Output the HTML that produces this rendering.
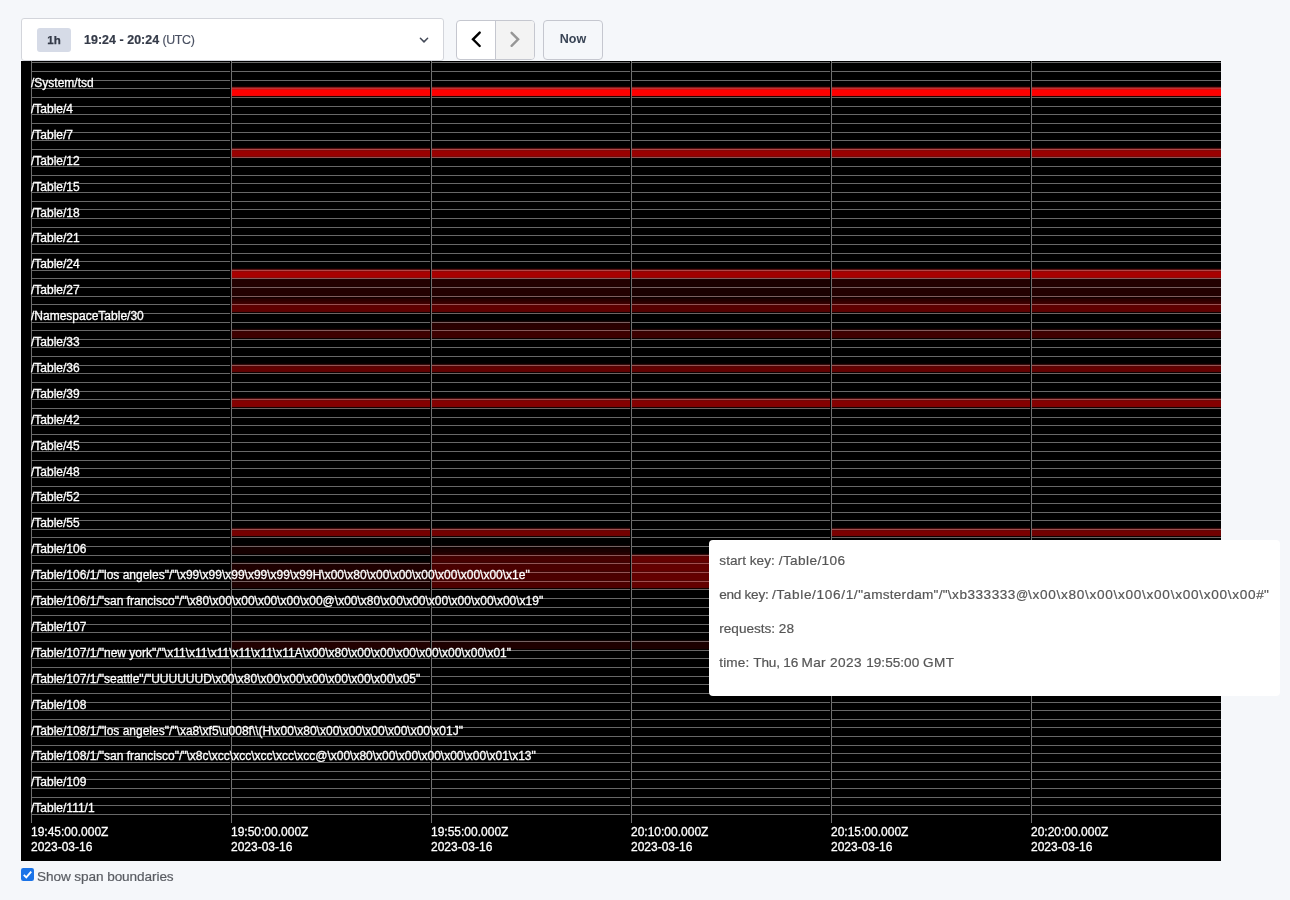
<!DOCTYPE html>
<html lang="en">
<head>
<meta charset="utf-8">
<title>Key Visualizer</title>
<style>
html,body{margin:0;padding:0}
body{width:1290px;height:900px;overflow:hidden;position:relative;background:#f5f7fa;font-family:"Liberation Sans",sans-serif;color:#394455}
.abs{position:absolute;box-sizing:border-box;will-change:transform}
.dd{left:21px;top:18px;width:423px;height:43px;background:#fff;border:1px solid #d3d5db;border-radius:3px}
.badge{left:37px;top:28px;width:34px;height:24px;border-radius:3px;background:#d6dbe7;font-weight:bold;font-size:11.5px;line-height:24px;text-align:center;color:#343a48;-webkit-text-stroke:0.25px #343a48}
.range{left:84px;top:30px;height:20px;line-height:20px;font-size:12.4px;white-space:pre;color:#4a5062;-webkit-text-stroke:0.15px #4a5062}
.range b{color:#343a48;-webkit-text-stroke:0.2px #343a48}
.caret{left:418px;top:35.9px;width:12px;height:8px}
.grp{left:456px;top:20px;width:79px;height:40px;border:1px solid #c5c7cf;border-radius:4px;background:#fff;overflow:hidden}
.grp .r{position:absolute;left:38px;top:0;width:39px;height:38px;background:#f3f3f3;border-left:1px solid #c5c7cf;box-sizing:border-box}
.now{left:543px;top:20px;width:60px;height:40px;margin:0;padding:0 0 2px;border:1px solid #c5c7cf;border-radius:4px;background:#f5f7fa;font-family:inherit;font-weight:bold;font-size:12.5px;line-height:36px;text-align:center;color:#394455;display:block}
.cv{position:absolute;left:21px;top:61px;display:block;will-change:transform}
.lb text{font-family:"Liberation Sans",sans-serif;font-size:12px;fill:#fff;stroke:#fff;stroke-width:0.3px}
.tip{left:709px;top:540px;width:571px;height:156px;background:#fff;border-radius:4px;padding:0 10px;color:#565656;font-size:13.6px;-webkit-text-stroke:0.2px #565656}
.tip p{margin:0;height:34px;line-height:34px;white-space:pre;position:absolute;left:10.3px}
.cb{left:21px;top:868px;width:13px;height:13px}
.cbl{left:36.6px;top:868px;height:18px;line-height:18px;font-size:13.6px;color:#595c62;white-space:pre;-webkit-text-stroke:0.2px #595c62}
</style>
</head>
<body>
<div class="abs dd"></div>
<div class="abs badge">1h</div>
<div class="abs range"><b><span style="letter-spacing:0.061px">19:24 - 20:24</span></b><span style="letter-spacing:-0.153px"> </span><span style="letter-spacing:-0.344px">(UTC)</span></div>
<svg class="abs caret" viewBox="0 0 12 8"><path d="M2.4 2.3 L6 5.9 L9.6 2.3" fill="none" stroke="#444a58" stroke-width="1.5" stroke-linecap="round" stroke-linejoin="round"/></svg>
<div class="abs grp"><div class="r"></div>
<svg style="position:absolute;left:0;top:0" width="78" height="38" viewBox="0 0 78 38"><path d="M22.7 11.6 L16 18.3 L22.7 25" fill="none" stroke="#000" stroke-width="2.4" stroke-linecap="round"/><path d="M54.6 11.8 L61.1 18.3 L54.6 24.8" fill="none" stroke="#969696" stroke-width="2.4" stroke-linecap="round"/></svg>
</div>
<button type="button" class="abs now">Now</button>
<svg class="cv" width="1200" height="800" viewBox="21 61 1200 800" shape-rendering="crispEdges">
<rect x="21" y="61" width="1200" height="800" fill="#000"/>
<path d="M32 62h198v1h-198zM32 71h198v1h-198zM32 80h198v1h-198zM32 88h198v1h-198zM32 97h198v1h-198zM32 106h198v1h-198zM32 114h198v1h-198zM32 123h198v1h-198zM32 132h198v1h-198zM32 140h198v1h-198zM32 149h198v1h-198zM32 157h198v1h-198zM32 166h198v1h-198zM32 175h198v1h-198zM32 183h198v1h-198zM32 192h198v1h-198zM32 201h198v1h-198zM32 209h198v1h-198zM32 218h198v1h-198zM32 227h198v1h-198zM32 235h198v1h-198zM32 244h198v1h-198zM32 253h198v1h-198zM32 261h198v1h-198zM32 270h198v1h-198zM32 278h198v1h-198zM32 287h198v1h-198zM32 296h198v1h-198zM32 304h198v1h-198zM32 313h198v1h-198zM32 322h198v1h-198zM32 330h198v1h-198zM32 339h198v1h-198zM32 347h198v1h-198zM32 356h198v1h-198zM32 365h198v1h-198zM32 373h198v1h-198zM32 382h198v1h-198zM32 391h198v1h-198zM32 399h198v1h-198zM32 408h198v1h-198zM32 417h198v1h-198zM32 425h198v1h-198zM32 434h198v1h-198zM32 442h198v1h-198zM32 451h198v1h-198zM32 460h198v1h-198zM32 468h198v1h-198zM32 477h198v1h-198zM32 486h198v1h-198zM32 494h198v1h-198zM32 503h198v1h-198zM32 512h198v1h-198zM32 520h198v1h-198zM32 529h198v1h-198zM32 537h198v1h-198zM32 546h198v1h-198zM32 555h198v1h-198zM32 563h198v1h-198zM32 572h198v1h-198zM32 581h198v1h-198zM32 589h198v1h-198zM32 598h198v1h-198zM32 607h198v1h-198zM32 615h198v1h-198zM32 624h198v1h-198zM32 632h198v1h-198zM32 641h198v1h-198zM32 650h198v1h-198zM32 658h198v1h-198zM32 667h198v1h-198zM32 676h198v1h-198zM32 684h198v1h-198zM32 693h198v1h-198zM32 702h198v1h-198zM32 710h198v1h-198zM32 719h198v1h-198zM32 727h198v1h-198zM32 736h198v1h-198zM32 745h198v1h-198zM32 753h198v1h-198zM32 762h198v1h-198zM32 771h198v1h-198zM32 779h198v1h-198zM32 788h198v1h-198zM32 797h198v1h-198zM32 805h198v1h-198zM32 814h198v1h-198z" fill="#686868"/>
<path d="M232 62h198v1h-198zM232 71h198v1h-198zM232 80h198v1h-198zM232 106h198v1h-198zM232 114h198v1h-198zM232 123h198v1h-198zM232 132h198v1h-198zM232 140h198v1h-198zM232 166h198v1h-198zM232 175h198v1h-198zM232 183h198v1h-198zM232 192h198v1h-198zM232 201h198v1h-198zM232 209h198v1h-198zM232 218h198v1h-198zM232 227h198v1h-198zM232 235h198v1h-198zM232 244h198v1h-198zM232 253h198v1h-198zM232 261h198v1h-198zM232 322h198v1h-198zM232 347h198v1h-198zM232 356h198v1h-198zM232 382h198v1h-198zM232 391h198v1h-198zM232 417h198v1h-198zM232 425h198v1h-198zM232 434h198v1h-198zM232 442h198v1h-198zM232 451h198v1h-198zM232 460h198v1h-198zM232 468h198v1h-198zM232 477h198v1h-198zM232 486h198v1h-198zM232 494h198v1h-198zM232 503h198v1h-198zM232 512h198v1h-198zM232 520h198v1h-198zM232 598h198v1h-198zM232 607h198v1h-198zM232 615h198v1h-198zM232 624h198v1h-198zM232 632h198v1h-198zM232 658h198v1h-198zM232 667h198v1h-198zM232 676h198v1h-198zM232 684h198v1h-198zM232 693h198v1h-198zM232 702h198v1h-198zM232 710h198v1h-198zM232 719h198v1h-198zM232 727h198v1h-198zM232 736h198v1h-198zM232 745h198v1h-198zM232 753h198v1h-198zM232 762h198v1h-198zM232 771h198v1h-198zM232 779h198v1h-198zM232 788h198v1h-198zM232 797h198v1h-198zM232 805h198v1h-198zM232 814h198v1h-198z" fill="#686868"/>
<rect x="232" y="86" width="198" height="1" fill="#1a0000"/>
<rect x="232" y="87" width="198" height="1" fill="#801a1a"/>
<rect x="232" y="88" width="198" height="1" fill="#bc3232"/>
<rect x="232" y="89" width="198" height="1" fill="#d90d0d"/>
<rect x="232" y="90" width="198" height="5" fill="#ff0000"/>
<rect x="232" y="95" width="198" height="1" fill="#ed0505"/>
<rect x="232" y="96" width="198" height="1" fill="#290000"/>
<rect x="232" y="97" width="198" height="1" fill="#72605e"/>
<path d="M232 147h198v1h-198zM232 312h198v1h-198z" fill="#0f0000"/>
<rect x="232" y="148" width="198" height="1" fill="#4c0f0f"/>
<rect x="232" y="149" width="198" height="1" fill="#ad4848"/>
<rect x="232" y="150" width="198" height="1" fill="#820808"/>
<rect x="232" y="151" width="198" height="5" fill="#990000"/>
<rect x="232" y="156" width="198" height="1" fill="#770909"/>
<rect x="232" y="157" width="198" height="1" fill="#965050"/>
<rect x="232" y="268" width="198" height="1" fill="#110000"/>
<rect x="232" y="269" width="198" height="1" fill="#541111"/>
<rect x="232" y="270" width="198" height="1" fill="#b44545"/>
<path d="M232 271h198v1h-198zM232 277h198v1h-198z" fill="#8f0808"/>
<rect x="232" y="272" width="198" height="5" fill="#a80000"/>
<rect x="232" y="278" width="198" height="1" fill="#8c5a5a"/>
<path d="M232 279h198v1h-198zM232 288h198v1h-198zM232 648h198v1h-198z" fill="#200101"/>
<path d="M232 280h198v6h-198zM232 289h198v6h-198z" fill="#230000"/>
<path d="M232 286h198v1h-198zM232 295h198v1h-198z" fill="#1e0202"/>
<rect x="232" y="287" width="198" height="1" fill="#7c5f5f"/>
<rect x="232" y="296" width="198" height="1" fill="#805d5d"/>
<path d="M232 297h198v1h-198zM232 553h198v1h-198z" fill="#140000"/>
<path d="M232 298h198v1h-198zM232 643h198v5h-198z" fill="#220000"/>
<rect x="232" y="299" width="198" height="2" fill="#2d0000"/>
<rect x="232" y="301" width="198" height="1" fill="#340000"/>
<rect x="232" y="302" width="198" height="1" fill="#380000"/>
<rect x="232" y="303" width="198" height="1" fill="#410000"/>
<rect x="232" y="304" width="198" height="1" fill="#985252"/>
<rect x="232" y="305" width="198" height="1" fill="#570303"/>
<rect x="232" y="306" width="198" height="5" fill="#5f0000"/>
<rect x="232" y="311" width="198" height="1" fill="#580202"/>
<path d="M232 313h198v1h-198zM232 373h198v1h-198z" fill="#6c6564"/>
<rect x="232" y="328" width="198" height="1" fill="#060000"/>
<rect x="232" y="329" width="198" height="1" fill="#1f0606"/>
<rect x="232" y="330" width="198" height="1" fill="#845b5b"/>
<rect x="232" y="331" width="198" height="1" fill="#350303"/>
<rect x="232" y="332" width="198" height="5" fill="#3e0000"/>
<rect x="232" y="337" width="198" height="1" fill="#3a0101"/>
<path d="M232 338h198v1h-198zM232 363h198v1h-198z" fill="#0a0000"/>
<rect x="232" y="339" width="198" height="1" fill="#6a6666"/>
<rect x="232" y="364" width="198" height="1" fill="#310a0a"/>
<rect x="232" y="365" width="198" height="1" fill="#945353"/>
<rect x="232" y="366" width="198" height="1" fill="#530505"/>
<rect x="232" y="367" width="198" height="4" fill="#620000"/>
<rect x="232" y="371" width="198" height="1" fill="#5b0202"/>
<rect x="232" y="372" width="198" height="1" fill="#100000"/>
<rect x="232" y="397" width="198" height="1" fill="#0d0000"/>
<rect x="232" y="398" width="198" height="1" fill="#420d0d"/>
<rect x="232" y="399" width="198" height="1" fill="#a34c4c"/>
<rect x="232" y="400" width="198" height="1" fill="#700707"/>
<rect x="232" y="401" width="198" height="5" fill="#840000"/>
<rect x="232" y="406" width="198" height="1" fill="#7b0303"/>
<rect x="232" y="407" width="198" height="1" fill="#150000"/>
<path d="M232 408h198v1h-198zM232 537h198v1h-198z" fill="#6d6463"/>
<rect x="232" y="527" width="198" height="1" fill="#0c0000"/>
<rect x="232" y="528" width="198" height="1" fill="#3b0c0c"/>
<rect x="232" y="529" width="198" height="1" fill="#9d4f4f"/>
<rect x="232" y="530" width="198" height="1" fill="#640606"/>
<rect x="232" y="531" width="198" height="4" fill="#760000"/>
<rect x="232" y="535" width="198" height="1" fill="#6e0202"/>
<rect x="232" y="536" width="198" height="1" fill="#130000"/>
<rect x="232" y="544" width="198" height="1" fill="#020000"/>
<rect x="232" y="545" width="198" height="1" fill="#0b0202"/>
<rect x="232" y="546" width="198" height="1" fill="#726363"/>
<rect x="232" y="547" width="198" height="1" fill="#130101"/>
<rect x="232" y="548" width="198" height="5" fill="#160000"/>
<rect x="232" y="554" width="198" height="1" fill="#040000"/>
<path d="M232 555h198v1h-198zM232 589h198v1h-198zM232 650h198v1h-198z" fill="#696767"/>
<path d="M232 561h198v1h-198zM232 639h198v1h-198z" fill="#030000"/>
<rect x="232" y="562" width="198" height="1" fill="#0f0303"/>
<rect x="232" y="563" width="198" height="1" fill="#766262"/>
<path d="M232 564h198v1h-198zM232 571h198v1h-198z" fill="#1a0202"/>
<path d="M232 565h198v6h-198zM232 583h198v4h-198z" fill="#1e0000"/>
<rect x="232" y="572" width="198" height="1" fill="#786161"/>
<rect x="232" y="573" width="198" height="1" fill="#1a0101"/>
<rect x="232" y="574" width="198" height="6" fill="#1c0000"/>
<rect x="232" y="580" width="198" height="1" fill="#180101"/>
<rect x="232" y="581" width="198" height="1" fill="#796161"/>
<path d="M232 582h198v1h-198zM232 587h198v1h-198z" fill="#1c0101"/>
<path d="M232 588h198v1h-198zM232 649h198v1h-198z" fill="#050000"/>
<rect x="232" y="640" width="198" height="1" fill="#110303"/>
<rect x="232" y="641" width="198" height="1" fill="#776161"/>
<rect x="232" y="642" width="198" height="1" fill="#1d0202"/>
<path d="M432 62h198v1h-198zM432 71h198v1h-198zM432 80h198v1h-198zM432 106h198v1h-198zM432 114h198v1h-198zM432 123h198v1h-198zM432 132h198v1h-198zM432 140h198v1h-198zM432 166h198v1h-198zM432 175h198v1h-198zM432 183h198v1h-198zM432 192h198v1h-198zM432 201h198v1h-198zM432 209h198v1h-198zM432 218h198v1h-198zM432 227h198v1h-198zM432 235h198v1h-198zM432 244h198v1h-198zM432 253h198v1h-198zM432 261h198v1h-198zM432 347h198v1h-198zM432 356h198v1h-198zM432 382h198v1h-198zM432 391h198v1h-198zM432 417h198v1h-198zM432 425h198v1h-198zM432 434h198v1h-198zM432 442h198v1h-198zM432 451h198v1h-198zM432 460h198v1h-198zM432 468h198v1h-198zM432 477h198v1h-198zM432 486h198v1h-198zM432 494h198v1h-198zM432 503h198v1h-198zM432 512h198v1h-198zM432 520h198v1h-198zM432 598h198v1h-198zM432 607h198v1h-198zM432 615h198v1h-198zM432 624h198v1h-198zM432 632h198v1h-198zM432 658h198v1h-198zM432 667h198v1h-198zM432 676h198v1h-198zM432 684h198v1h-198zM432 693h198v1h-198zM432 702h198v1h-198zM432 710h198v1h-198zM432 719h198v1h-198zM432 727h198v1h-198zM432 736h198v1h-198zM432 745h198v1h-198zM432 753h198v1h-198zM432 762h198v1h-198zM432 771h198v1h-198zM432 779h198v1h-198zM432 788h198v1h-198zM432 797h198v1h-198zM432 805h198v1h-198zM432 814h198v1h-198z" fill="#686868"/>
<path d="M432 86h198v1h-198zM432 549h198v3h-198z" fill="#1a0000"/>
<rect x="432" y="87" width="198" height="1" fill="#801a1a"/>
<rect x="432" y="88" width="198" height="1" fill="#bc3232"/>
<rect x="432" y="89" width="198" height="1" fill="#d90d0d"/>
<rect x="432" y="90" width="198" height="5" fill="#ff0000"/>
<rect x="432" y="95" width="198" height="1" fill="#ed0505"/>
<rect x="432" y="96" width="198" height="1" fill="#290000"/>
<rect x="432" y="97" width="198" height="1" fill="#72605e"/>
<path d="M432 147h198v1h-198zM432 312h198v1h-198z" fill="#0f0000"/>
<rect x="432" y="148" width="198" height="1" fill="#4c0f0f"/>
<rect x="432" y="149" width="198" height="1" fill="#ad4848"/>
<rect x="432" y="150" width="198" height="1" fill="#820808"/>
<rect x="432" y="151" width="198" height="5" fill="#990000"/>
<rect x="432" y="156" width="198" height="1" fill="#770909"/>
<rect x="432" y="157" width="198" height="1" fill="#965050"/>
<rect x="432" y="268" width="198" height="1" fill="#110000"/>
<rect x="432" y="269" width="198" height="1" fill="#541111"/>
<rect x="432" y="270" width="198" height="1" fill="#b44545"/>
<path d="M432 271h198v1h-198zM432 277h198v1h-198z" fill="#8f0808"/>
<rect x="432" y="272" width="198" height="5" fill="#a80000"/>
<rect x="432" y="278" width="198" height="1" fill="#8c5a5a"/>
<path d="M432 279h198v1h-198zM432 288h198v1h-198z" fill="#200101"/>
<path d="M432 280h198v6h-198zM432 289h198v6h-198z" fill="#230000"/>
<path d="M432 286h198v1h-198zM432 295h198v1h-198z" fill="#1e0202"/>
<rect x="432" y="287" width="198" height="1" fill="#7c5f5f"/>
<rect x="432" y="296" width="198" height="1" fill="#7f5e5e"/>
<path d="M432 297h198v1h-198zM432 536h198v1h-198z" fill="#130000"/>
<path d="M432 298h198v1h-198zM432 552h198v1h-198z" fill="#200000"/>
<path d="M432 299h198v2h-198zM432 324h198v5h-198z" fill="#2a0000"/>
<rect x="432" y="301" width="198" height="1" fill="#310000"/>
<rect x="432" y="302" width="198" height="1" fill="#360000"/>
<rect x="432" y="303" width="198" height="1" fill="#3f0000"/>
<rect x="432" y="304" width="198" height="1" fill="#985252"/>
<rect x="432" y="305" width="198" height="1" fill="#570303"/>
<rect x="432" y="306" width="198" height="5" fill="#5f0000"/>
<rect x="432" y="311" width="198" height="1" fill="#580202"/>
<path d="M432 313h198v1h-198zM432 373h198v1h-198z" fill="#6c6564"/>
<rect x="432" y="320" width="198" height="1" fill="#040000"/>
<rect x="432" y="321" width="198" height="1" fill="#150404"/>
<rect x="432" y="322" width="198" height="1" fill="#7b5f5f"/>
<path d="M432 323h198v1h-198zM432 329h198v1h-198z" fill="#240202"/>
<rect x="432" y="330" width="198" height="1" fill="#895959"/>
<rect x="432" y="331" width="198" height="1" fill="#390202"/>
<rect x="432" y="332" width="198" height="5" fill="#3e0000"/>
<rect x="432" y="337" width="198" height="1" fill="#3a0101"/>
<path d="M432 338h198v1h-198zM432 363h198v1h-198z" fill="#0a0000"/>
<rect x="432" y="339" width="198" height="1" fill="#6a6666"/>
<rect x="432" y="364" width="198" height="1" fill="#310a0a"/>
<rect x="432" y="365" width="198" height="1" fill="#945353"/>
<rect x="432" y="366" width="198" height="1" fill="#530505"/>
<rect x="432" y="367" width="198" height="4" fill="#620000"/>
<rect x="432" y="371" width="198" height="1" fill="#5b0202"/>
<rect x="432" y="372" width="198" height="1" fill="#100000"/>
<rect x="432" y="397" width="198" height="1" fill="#0d0000"/>
<rect x="432" y="398" width="198" height="1" fill="#420d0d"/>
<rect x="432" y="399" width="198" height="1" fill="#a34c4c"/>
<rect x="432" y="400" width="198" height="1" fill="#700707"/>
<rect x="432" y="401" width="198" height="5" fill="#840000"/>
<rect x="432" y="406" width="198" height="1" fill="#7b0303"/>
<rect x="432" y="407" width="198" height="1" fill="#150000"/>
<rect x="432" y="408" width="198" height="1" fill="#6d6463"/>
<path d="M432 527h198v1h-198zM432 547h198v1h-198zM432 588h198v1h-198z" fill="#0c0000"/>
<rect x="432" y="528" width="198" height="1" fill="#3a0c0c"/>
<rect x="432" y="529" width="198" height="1" fill="#9c5050"/>
<rect x="432" y="530" width="198" height="1" fill="#630606"/>
<rect x="432" y="531" width="198" height="4" fill="#740000"/>
<rect x="432" y="535" width="198" height="1" fill="#6c0202"/>
<rect x="432" y="537" width="198" height="1" fill="#6d6563"/>
<path d="M432 544h198v1h-198zM432 639h198v1h-198z" fill="#030000"/>
<rect x="432" y="545" width="198" height="1" fill="#0d0303"/>
<rect x="432" y="546" width="198" height="1" fill="#746363"/>
<rect x="432" y="548" width="198" height="1" fill="#140000"/>
<rect x="432" y="553" width="198" height="1" fill="#240000"/>
<rect x="432" y="554" width="198" height="1" fill="#2c0000"/>
<rect x="432" y="555" width="198" height="1" fill="#8b5858"/>
<rect x="432" y="556" width="198" height="1" fill="#400202"/>
<rect x="432" y="557" width="198" height="5" fill="#460000"/>
<rect x="432" y="562" width="198" height="1" fill="#3c0404"/>
<rect x="432" y="563" width="198" height="1" fill="#925656"/>
<rect x="432" y="564" width="198" height="1" fill="#440202"/>
<rect x="432" y="565" width="198" height="6" fill="#4a0000"/>
<rect x="432" y="571" width="198" height="1" fill="#3f0404"/>
<rect x="432" y="572" width="198" height="1" fill="#935555"/>
<rect x="432" y="573" width="198" height="1" fill="#460202"/>
<rect x="432" y="574" width="198" height="6" fill="#4c0000"/>
<rect x="432" y="580" width="198" height="1" fill="#410404"/>
<rect x="432" y="581" width="198" height="1" fill="#945555"/>
<rect x="432" y="582" width="198" height="1" fill="#480202"/>
<rect x="432" y="583" width="198" height="4" fill="#4e0000"/>
<rect x="432" y="587" width="198" height="1" fill="#490202"/>
<rect x="432" y="589" width="198" height="1" fill="#6b6665"/>
<rect x="432" y="640" width="198" height="1" fill="#0f0303"/>
<rect x="432" y="641" width="198" height="1" fill="#766262"/>
<rect x="432" y="642" width="198" height="1" fill="#1a0202"/>
<rect x="432" y="643" width="198" height="5" fill="#1e0000"/>
<rect x="432" y="648" width="198" height="1" fill="#1c0101"/>
<rect x="432" y="649" width="198" height="1" fill="#050000"/>
<rect x="432" y="650" width="198" height="1" fill="#696767"/>
<path d="M632 62h198v1h-198zM632 71h198v1h-198zM632 80h198v1h-198zM632 106h198v1h-198zM632 114h198v1h-198zM632 123h198v1h-198zM632 132h198v1h-198zM632 140h198v1h-198zM632 166h198v1h-198zM632 175h198v1h-198zM632 183h198v1h-198zM632 192h198v1h-198zM632 201h198v1h-198zM632 209h198v1h-198zM632 218h198v1h-198zM632 227h198v1h-198zM632 235h198v1h-198zM632 244h198v1h-198zM632 253h198v1h-198zM632 261h198v1h-198zM632 322h198v1h-198zM632 347h198v1h-198zM632 356h198v1h-198zM632 382h198v1h-198zM632 391h198v1h-198zM632 417h198v1h-198zM632 425h198v1h-198zM632 434h198v1h-198zM632 442h198v1h-198zM632 451h198v1h-198zM632 460h198v1h-198zM632 468h198v1h-198zM632 477h198v1h-198zM632 486h198v1h-198zM632 494h198v1h-198zM632 503h198v1h-198zM632 512h198v1h-198zM632 520h198v1h-198zM632 529h198v1h-198zM632 537h198v1h-198zM632 546h198v1h-198zM632 598h198v1h-198zM632 607h198v1h-198zM632 615h198v1h-198zM632 624h198v1h-198zM632 632h198v1h-198zM632 658h198v1h-198zM632 667h198v1h-198zM632 676h198v1h-198zM632 684h198v1h-198zM632 693h198v1h-198zM632 702h198v1h-198zM632 710h198v1h-198zM632 719h198v1h-198zM632 727h198v1h-198zM632 736h198v1h-198zM632 745h198v1h-198zM632 753h198v1h-198zM632 762h198v1h-198zM632 771h198v1h-198zM632 779h198v1h-198zM632 788h198v1h-198zM632 797h198v1h-198zM632 805h198v1h-198zM632 814h198v1h-198z" fill="#686868"/>
<path d="M632 86h198v1h-198zM632 280h198v6h-198zM632 289h198v6h-198z" fill="#1a0000"/>
<rect x="632" y="87" width="198" height="1" fill="#801a1a"/>
<rect x="632" y="88" width="198" height="1" fill="#bc3232"/>
<rect x="632" y="89" width="198" height="1" fill="#d90d0d"/>
<rect x="632" y="90" width="198" height="5" fill="#ff0000"/>
<rect x="632" y="95" width="198" height="1" fill="#ed0505"/>
<rect x="632" y="96" width="198" height="1" fill="#290000"/>
<rect x="632" y="97" width="198" height="1" fill="#72605e"/>
<rect x="632" y="147" width="198" height="1" fill="#0f0000"/>
<rect x="632" y="148" width="198" height="1" fill="#4c0f0f"/>
<rect x="632" y="149" width="198" height="1" fill="#ad4848"/>
<rect x="632" y="150" width="198" height="1" fill="#820808"/>
<rect x="632" y="151" width="198" height="5" fill="#990000"/>
<rect x="632" y="156" width="198" height="1" fill="#770909"/>
<rect x="632" y="157" width="198" height="1" fill="#965050"/>
<path d="M632 268h198v1h-198zM632 372h198v1h-198zM632 588h198v1h-198z" fill="#100000"/>
<rect x="632" y="269" width="198" height="1" fill="#501010"/>
<rect x="632" y="270" width="198" height="1" fill="#b04646"/>
<path d="M632 271h198v1h-198zM632 277h198v1h-198z" fill="#880808"/>
<rect x="632" y="272" width="198" height="5" fill="#a00000"/>
<rect x="632" y="278" width="198" height="1" fill="#875c5c"/>
<path d="M632 279h198v1h-198zM632 288h198v1h-198zM632 642h198v1h-198z" fill="#180101"/>
<path d="M632 286h198v1h-198zM632 295h198v1h-198z" fill="#160101"/>
<rect x="632" y="287" width="198" height="1" fill="#776262"/>
<rect x="632" y="296" width="198" height="1" fill="#7a6060"/>
<path d="M632 297h198v1h-198zM632 312h198v1h-198z" fill="#0e0000"/>
<rect x="632" y="298" width="198" height="1" fill="#180000"/>
<rect x="632" y="299" width="198" height="2" fill="#200000"/>
<rect x="632" y="301" width="198" height="1" fill="#270000"/>
<rect x="632" y="302" width="198" height="1" fill="#2c0000"/>
<rect x="632" y="303" width="198" height="1" fill="#350000"/>
<rect x="632" y="304" width="198" height="1" fill="#925555"/>
<rect x="632" y="305" width="198" height="1" fill="#4e0303"/>
<rect x="632" y="306" width="198" height="5" fill="#550000"/>
<rect x="632" y="311" width="198" height="1" fill="#4f0202"/>
<rect x="632" y="313" width="198" height="1" fill="#6b6565"/>
<rect x="632" y="328" width="198" height="1" fill="#060000"/>
<rect x="632" y="329" width="198" height="1" fill="#1e0606"/>
<rect x="632" y="330" width="198" height="1" fill="#835b5b"/>
<rect x="632" y="331" width="198" height="1" fill="#330303"/>
<rect x="632" y="332" width="198" height="5" fill="#3c0000"/>
<rect x="632" y="337" width="198" height="1" fill="#380101"/>
<path d="M632 338h198v1h-198zM632 363h198v1h-198zM632 553h198v1h-198z" fill="#0a0000"/>
<rect x="632" y="339" width="198" height="1" fill="#6a6666"/>
<rect x="632" y="364" width="198" height="1" fill="#310a0a"/>
<rect x="632" y="365" width="198" height="1" fill="#945353"/>
<rect x="632" y="366" width="198" height="1" fill="#530505"/>
<rect x="632" y="367" width="198" height="4" fill="#620000"/>
<rect x="632" y="371" width="198" height="1" fill="#5b0202"/>
<path d="M632 373h198v1h-198zM632 589h198v1h-198z" fill="#6c6564"/>
<rect x="632" y="397" width="198" height="1" fill="#0d0000"/>
<rect x="632" y="398" width="198" height="1" fill="#420d0d"/>
<rect x="632" y="399" width="198" height="1" fill="#a34c4c"/>
<rect x="632" y="400" width="198" height="1" fill="#700707"/>
<rect x="632" y="401" width="198" height="5" fill="#840000"/>
<rect x="632" y="406" width="198" height="1" fill="#7b0303"/>
<rect x="632" y="407" width="198" height="1" fill="#150000"/>
<rect x="632" y="408" width="198" height="1" fill="#6d6463"/>
<rect x="632" y="554" width="198" height="1" fill="#320a0a"/>
<rect x="632" y="555" width="198" height="1" fill="#955353"/>
<path d="M632 556h198v1h-198zM632 562h198v1h-198zM632 571h198v1h-198zM632 580h198v1h-198z" fill="#550505"/>
<path d="M632 557h198v5h-198zM632 565h198v6h-198zM632 574h198v6h-198zM632 583h198v4h-198z" fill="#640000"/>
<path d="M632 563h198v1h-198zM632 572h198v1h-198zM632 581h198v1h-198z" fill="#a14f4f"/>
<path d="M632 564h198v1h-198zM632 573h198v1h-198zM632 582h198v1h-198z" fill="#5c0303"/>
<rect x="632" y="587" width="198" height="1" fill="#5d0202"/>
<rect x="632" y="639" width="198" height="1" fill="#030000"/>
<rect x="632" y="640" width="198" height="1" fill="#0e0303"/>
<rect x="632" y="641" width="198" height="1" fill="#756262"/>
<rect x="632" y="643" width="198" height="5" fill="#1c0000"/>
<rect x="632" y="648" width="198" height="1" fill="#1a0101"/>
<rect x="632" y="649" width="198" height="1" fill="#040000"/>
<rect x="632" y="650" width="198" height="1" fill="#696767"/>
<path d="M832 62h198v1h-198zM832 71h198v1h-198zM832 80h198v1h-198zM832 106h198v1h-198zM832 114h198v1h-198zM832 123h198v1h-198zM832 132h198v1h-198zM832 140h198v1h-198zM832 166h198v1h-198zM832 175h198v1h-198zM832 183h198v1h-198zM832 192h198v1h-198zM832 201h198v1h-198zM832 209h198v1h-198zM832 218h198v1h-198zM832 227h198v1h-198zM832 235h198v1h-198zM832 244h198v1h-198zM832 253h198v1h-198zM832 261h198v1h-198zM832 322h198v1h-198zM832 347h198v1h-198zM832 356h198v1h-198zM832 382h198v1h-198zM832 391h198v1h-198zM832 417h198v1h-198zM832 425h198v1h-198zM832 434h198v1h-198zM832 442h198v1h-198zM832 451h198v1h-198zM832 460h198v1h-198zM832 468h198v1h-198zM832 477h198v1h-198zM832 486h198v1h-198zM832 494h198v1h-198zM832 503h198v1h-198zM832 512h198v1h-198zM832 520h198v1h-198zM832 546h198v1h-198zM832 555h198v1h-198zM832 563h198v1h-198zM832 572h198v1h-198zM832 581h198v1h-198zM832 589h198v1h-198zM832 598h198v1h-198zM832 607h198v1h-198zM832 615h198v1h-198zM832 624h198v1h-198zM832 632h198v1h-198zM832 641h198v1h-198zM832 650h198v1h-198zM832 658h198v1h-198zM832 667h198v1h-198zM832 676h198v1h-198zM832 684h198v1h-198zM832 693h198v1h-198zM832 702h198v1h-198zM832 710h198v1h-198zM832 719h198v1h-198zM832 727h198v1h-198zM832 736h198v1h-198zM832 745h198v1h-198zM832 753h198v1h-198zM832 762h198v1h-198zM832 771h198v1h-198zM832 779h198v1h-198zM832 788h198v1h-198zM832 797h198v1h-198zM832 805h198v1h-198zM832 814h198v1h-198z" fill="#686868"/>
<rect x="832" y="86" width="198" height="1" fill="#1a0000"/>
<rect x="832" y="87" width="198" height="1" fill="#801a1a"/>
<rect x="832" y="88" width="198" height="1" fill="#bc3232"/>
<rect x="832" y="89" width="198" height="1" fill="#d90d0d"/>
<rect x="832" y="90" width="198" height="5" fill="#ff0000"/>
<rect x="832" y="95" width="198" height="1" fill="#ed0505"/>
<rect x="832" y="96" width="198" height="1" fill="#290000"/>
<rect x="832" y="97" width="198" height="1" fill="#72605e"/>
<path d="M832 147h198v1h-198zM832 312h198v1h-198z" fill="#0f0000"/>
<rect x="832" y="148" width="198" height="1" fill="#4c0f0f"/>
<rect x="832" y="149" width="198" height="1" fill="#ad4848"/>
<rect x="832" y="150" width="198" height="1" fill="#820808"/>
<rect x="832" y="151" width="198" height="5" fill="#990000"/>
<rect x="832" y="156" width="198" height="1" fill="#770909"/>
<rect x="832" y="157" width="198" height="1" fill="#965050"/>
<rect x="832" y="268" width="198" height="1" fill="#110000"/>
<rect x="832" y="269" width="198" height="1" fill="#541111"/>
<rect x="832" y="270" width="198" height="1" fill="#b44545"/>
<path d="M832 271h198v1h-198zM832 277h198v1h-198z" fill="#8f0808"/>
<rect x="832" y="272" width="198" height="5" fill="#a80000"/>
<rect x="832" y="278" width="198" height="1" fill="#8c5a5a"/>
<path d="M832 279h198v1h-198zM832 288h198v1h-198z" fill="#200101"/>
<path d="M832 280h198v6h-198zM832 289h198v6h-198z" fill="#230000"/>
<path d="M832 286h198v1h-198zM832 295h198v1h-198z" fill="#1e0202"/>
<rect x="832" y="287" width="198" height="1" fill="#7c5f5f"/>
<rect x="832" y="296" width="198" height="1" fill="#805d5d"/>
<path d="M832 297h198v1h-198zM832 536h198v1h-198z" fill="#140000"/>
<rect x="832" y="298" width="198" height="1" fill="#220000"/>
<rect x="832" y="299" width="198" height="2" fill="#2d0000"/>
<rect x="832" y="301" width="198" height="1" fill="#340000"/>
<rect x="832" y="302" width="198" height="1" fill="#380000"/>
<rect x="832" y="303" width="198" height="1" fill="#410000"/>
<rect x="832" y="304" width="198" height="1" fill="#985252"/>
<rect x="832" y="305" width="198" height="1" fill="#570303"/>
<rect x="832" y="306" width="198" height="5" fill="#5f0000"/>
<rect x="832" y="311" width="198" height="1" fill="#580202"/>
<path d="M832 313h198v1h-198zM832 373h198v1h-198z" fill="#6c6564"/>
<rect x="832" y="328" width="198" height="1" fill="#060000"/>
<rect x="832" y="329" width="198" height="1" fill="#200606"/>
<rect x="832" y="330" width="198" height="1" fill="#855b5b"/>
<rect x="832" y="331" width="198" height="1" fill="#360303"/>
<rect x="832" y="332" width="198" height="5" fill="#400000"/>
<rect x="832" y="337" width="198" height="1" fill="#3c0101"/>
<path d="M832 338h198v1h-198zM832 363h198v1h-198z" fill="#0a0000"/>
<rect x="832" y="339" width="198" height="1" fill="#6b6665"/>
<rect x="832" y="364" width="198" height="1" fill="#320a0a"/>
<rect x="832" y="365" width="198" height="1" fill="#955353"/>
<rect x="832" y="366" width="198" height="1" fill="#550505"/>
<rect x="832" y="367" width="198" height="4" fill="#640000"/>
<rect x="832" y="371" width="198" height="1" fill="#5d0202"/>
<rect x="832" y="372" width="198" height="1" fill="#100000"/>
<rect x="832" y="397" width="198" height="1" fill="#0d0000"/>
<rect x="832" y="398" width="198" height="1" fill="#420d0d"/>
<rect x="832" y="399" width="198" height="1" fill="#a34c4c"/>
<rect x="832" y="400" width="198" height="1" fill="#700707"/>
<rect x="832" y="401" width="198" height="5" fill="#840000"/>
<rect x="832" y="406" width="198" height="1" fill="#7b0303"/>
<rect x="832" y="407" width="198" height="1" fill="#150000"/>
<path d="M832 408h198v1h-198zM832 537h198v1h-198z" fill="#6d6463"/>
<rect x="832" y="527" width="198" height="1" fill="#0c0000"/>
<rect x="832" y="528" width="198" height="1" fill="#3e0c0c"/>
<rect x="832" y="529" width="198" height="1" fill="#a04e4e"/>
<rect x="832" y="530" width="198" height="1" fill="#690606"/>
<rect x="832" y="531" width="198" height="4" fill="#7c0000"/>
<rect x="832" y="535" width="198" height="1" fill="#730202"/>
<path d="M1032 62h189v1h-189zM1032 71h189v1h-189zM1032 80h189v1h-189zM1032 106h189v1h-189zM1032 114h189v1h-189zM1032 123h189v1h-189zM1032 132h189v1h-189zM1032 140h189v1h-189zM1032 166h189v1h-189zM1032 175h189v1h-189zM1032 183h189v1h-189zM1032 192h189v1h-189zM1032 201h189v1h-189zM1032 209h189v1h-189zM1032 218h189v1h-189zM1032 227h189v1h-189zM1032 235h189v1h-189zM1032 244h189v1h-189zM1032 253h189v1h-189zM1032 261h189v1h-189zM1032 322h189v1h-189zM1032 347h189v1h-189zM1032 356h189v1h-189zM1032 382h189v1h-189zM1032 391h189v1h-189zM1032 417h189v1h-189zM1032 425h189v1h-189zM1032 434h189v1h-189zM1032 442h189v1h-189zM1032 451h189v1h-189zM1032 460h189v1h-189zM1032 468h189v1h-189zM1032 477h189v1h-189zM1032 486h189v1h-189zM1032 494h189v1h-189zM1032 503h189v1h-189zM1032 512h189v1h-189zM1032 520h189v1h-189zM1032 546h189v1h-189zM1032 555h189v1h-189zM1032 563h189v1h-189zM1032 572h189v1h-189zM1032 581h189v1h-189zM1032 589h189v1h-189zM1032 598h189v1h-189zM1032 607h189v1h-189zM1032 615h189v1h-189zM1032 624h189v1h-189zM1032 632h189v1h-189zM1032 641h189v1h-189zM1032 650h189v1h-189zM1032 658h189v1h-189zM1032 667h189v1h-189zM1032 676h189v1h-189zM1032 684h189v1h-189zM1032 693h189v1h-189zM1032 702h189v1h-189zM1032 710h189v1h-189zM1032 719h189v1h-189zM1032 727h189v1h-189zM1032 736h189v1h-189zM1032 745h189v1h-189zM1032 753h189v1h-189zM1032 762h189v1h-189zM1032 771h189v1h-189zM1032 779h189v1h-189zM1032 788h189v1h-189zM1032 797h189v1h-189zM1032 805h189v1h-189zM1032 814h189v1h-189z" fill="#686868"/>
<rect x="1032" y="86" width="189" height="1" fill="#1a0000"/>
<rect x="1032" y="87" width="189" height="1" fill="#801a1a"/>
<rect x="1032" y="88" width="189" height="1" fill="#bc3232"/>
<rect x="1032" y="89" width="189" height="1" fill="#d90d0d"/>
<rect x="1032" y="90" width="189" height="5" fill="#ff0000"/>
<rect x="1032" y="95" width="189" height="1" fill="#ed0505"/>
<rect x="1032" y="96" width="189" height="1" fill="#290000"/>
<rect x="1032" y="97" width="189" height="1" fill="#72605e"/>
<path d="M1032 147h189v1h-189zM1032 312h189v1h-189z" fill="#0f0000"/>
<rect x="1032" y="148" width="189" height="1" fill="#4c0f0f"/>
<rect x="1032" y="149" width="189" height="1" fill="#ad4848"/>
<rect x="1032" y="150" width="189" height="1" fill="#820808"/>
<rect x="1032" y="151" width="189" height="5" fill="#990000"/>
<rect x="1032" y="156" width="189" height="1" fill="#770909"/>
<rect x="1032" y="157" width="189" height="1" fill="#965050"/>
<rect x="1032" y="268" width="189" height="1" fill="#110000"/>
<rect x="1032" y="269" width="189" height="1" fill="#541111"/>
<rect x="1032" y="270" width="189" height="1" fill="#b44545"/>
<path d="M1032 271h189v1h-189zM1032 277h189v1h-189z" fill="#8f0808"/>
<rect x="1032" y="272" width="189" height="5" fill="#a80000"/>
<rect x="1032" y="278" width="189" height="1" fill="#8c5a5a"/>
<path d="M1032 279h189v1h-189zM1032 288h189v1h-189z" fill="#200101"/>
<path d="M1032 280h189v6h-189zM1032 289h189v6h-189z" fill="#230000"/>
<path d="M1032 286h189v1h-189zM1032 295h189v1h-189z" fill="#1e0202"/>
<rect x="1032" y="287" width="189" height="1" fill="#7c5f5f"/>
<rect x="1032" y="296" width="189" height="1" fill="#805d5d"/>
<rect x="1032" y="297" width="189" height="1" fill="#140000"/>
<rect x="1032" y="298" width="189" height="1" fill="#220000"/>
<rect x="1032" y="299" width="189" height="2" fill="#2d0000"/>
<rect x="1032" y="301" width="189" height="1" fill="#340000"/>
<rect x="1032" y="302" width="189" height="1" fill="#380000"/>
<rect x="1032" y="303" width="189" height="1" fill="#410000"/>
<rect x="1032" y="304" width="189" height="1" fill="#985252"/>
<rect x="1032" y="305" width="189" height="1" fill="#570303"/>
<rect x="1032" y="306" width="189" height="5" fill="#5f0000"/>
<rect x="1032" y="311" width="189" height="1" fill="#580202"/>
<path d="M1032 313h189v1h-189zM1032 373h189v1h-189z" fill="#6c6564"/>
<rect x="1032" y="328" width="189" height="1" fill="#060000"/>
<rect x="1032" y="329" width="189" height="1" fill="#200606"/>
<rect x="1032" y="330" width="189" height="1" fill="#855b5b"/>
<rect x="1032" y="331" width="189" height="1" fill="#360303"/>
<rect x="1032" y="332" width="189" height="5" fill="#400000"/>
<rect x="1032" y="337" width="189" height="1" fill="#3c0101"/>
<path d="M1032 338h189v1h-189zM1032 363h189v1h-189z" fill="#0a0000"/>
<rect x="1032" y="339" width="189" height="1" fill="#6b6665"/>
<rect x="1032" y="364" width="189" height="1" fill="#320a0a"/>
<rect x="1032" y="365" width="189" height="1" fill="#955353"/>
<rect x="1032" y="366" width="189" height="1" fill="#550505"/>
<rect x="1032" y="367" width="189" height="4" fill="#640000"/>
<rect x="1032" y="371" width="189" height="1" fill="#5d0202"/>
<rect x="1032" y="372" width="189" height="1" fill="#100000"/>
<rect x="1032" y="397" width="189" height="1" fill="#0d0000"/>
<rect x="1032" y="398" width="189" height="1" fill="#420d0d"/>
<rect x="1032" y="399" width="189" height="1" fill="#a34c4c"/>
<rect x="1032" y="400" width="189" height="1" fill="#700707"/>
<rect x="1032" y="401" width="189" height="5" fill="#840000"/>
<rect x="1032" y="406" width="189" height="1" fill="#7b0303"/>
<rect x="1032" y="407" width="189" height="1" fill="#150000"/>
<rect x="1032" y="408" width="189" height="1" fill="#6d6463"/>
<rect x="1032" y="527" width="189" height="1" fill="#0b0000"/>
<rect x="1032" y="528" width="189" height="1" fill="#390b0b"/>
<rect x="1032" y="529" width="189" height="1" fill="#9b5050"/>
<rect x="1032" y="530" width="189" height="1" fill="#610606"/>
<rect x="1032" y="531" width="189" height="4" fill="#720000"/>
<rect x="1032" y="535" width="189" height="1" fill="#6a0202"/>
<rect x="1032" y="536" width="189" height="1" fill="#120000"/>
<rect x="1032" y="537" width="189" height="1" fill="#6d6563"/>
<rect x="31" y="61" width="1" height="762" fill="#6e6e6e"/>
<rect x="231" y="61" width="1" height="762" fill="#6e6e6e"/>
<rect x="231" y="88" width="1" height="9" fill="#8d5f5f"/>
<rect x="231" y="149" width="1" height="8" fill="#806565"/>
<rect x="231" y="270" width="1" height="8" fill="#826464"/>
<rect x="231" y="278" width="1" height="9" fill="#726c6c"/>
<rect x="231" y="287" width="1" height="9" fill="#726c6c"/>
<rect x="231" y="296" width="1" height="8" fill="#736b6b"/>
<rect x="231" y="304" width="1" height="9" fill="#796868"/>
<rect x="231" y="330" width="1" height="9" fill="#756a6a"/>
<rect x="231" y="365" width="1" height="8" fill="#7a6868"/>
<rect x="231" y="399" width="1" height="9" fill="#7e6666"/>
<rect x="231" y="529" width="1" height="8" fill="#7c6767"/>
<rect x="231" y="546" width="1" height="9" fill="#716d6d"/>
<rect x="231" y="563" width="1" height="9" fill="#726c6c"/>
<rect x="231" y="572" width="1" height="9" fill="#716c6c"/>
<rect x="231" y="581" width="1" height="8" fill="#726c6c"/>
<rect x="231" y="641" width="1" height="9" fill="#726c6c"/>
<rect x="431" y="61" width="1" height="762" fill="#6e6e6e"/>
<rect x="431" y="88" width="1" height="9" fill="#8d5f5f"/>
<rect x="431" y="149" width="1" height="8" fill="#806565"/>
<rect x="431" y="270" width="1" height="8" fill="#826464"/>
<rect x="431" y="278" width="1" height="9" fill="#726c6c"/>
<rect x="431" y="287" width="1" height="9" fill="#726c6c"/>
<rect x="431" y="296" width="1" height="8" fill="#736b6b"/>
<rect x="431" y="304" width="1" height="9" fill="#796868"/>
<rect x="431" y="322" width="1" height="8" fill="#736b6b"/>
<rect x="431" y="330" width="1" height="9" fill="#756a6a"/>
<rect x="431" y="365" width="1" height="8" fill="#7a6868"/>
<rect x="431" y="399" width="1" height="9" fill="#7e6666"/>
<rect x="431" y="529" width="1" height="8" fill="#7c6767"/>
<rect x="431" y="546" width="1" height="9" fill="#716c6c"/>
<rect x="431" y="555" width="1" height="8" fill="#766a6a"/>
<rect x="431" y="563" width="1" height="9" fill="#776a6a"/>
<rect x="431" y="572" width="1" height="9" fill="#776969"/>
<rect x="431" y="581" width="1" height="8" fill="#776969"/>
<rect x="431" y="641" width="1" height="9" fill="#726c6c"/>
<rect x="631" y="61" width="1" height="762" fill="#6e6e6e"/>
<rect x="631" y="88" width="1" height="9" fill="#8d5f5f"/>
<rect x="631" y="149" width="1" height="8" fill="#806565"/>
<rect x="631" y="270" width="1" height="8" fill="#816464"/>
<rect x="631" y="278" width="1" height="9" fill="#716c6c"/>
<rect x="631" y="287" width="1" height="9" fill="#716c6c"/>
<rect x="631" y="296" width="1" height="8" fill="#726c6c"/>
<rect x="631" y="304" width="1" height="9" fill="#786969"/>
<rect x="631" y="330" width="1" height="9" fill="#756a6a"/>
<rect x="631" y="365" width="1" height="8" fill="#7a6868"/>
<rect x="631" y="399" width="1" height="9" fill="#7e6666"/>
<rect x="631" y="555" width="1" height="8" fill="#7a6868"/>
<rect x="631" y="563" width="1" height="9" fill="#7a6868"/>
<rect x="631" y="572" width="1" height="9" fill="#7a6868"/>
<rect x="631" y="581" width="1" height="8" fill="#7a6868"/>
<rect x="631" y="641" width="1" height="9" fill="#716c6c"/>
<rect x="831" y="61" width="1" height="762" fill="#6e6e6e"/>
<rect x="831" y="88" width="1" height="9" fill="#8d5f5f"/>
<rect x="831" y="149" width="1" height="8" fill="#806565"/>
<rect x="831" y="270" width="1" height="8" fill="#826464"/>
<rect x="831" y="278" width="1" height="9" fill="#726c6c"/>
<rect x="831" y="287" width="1" height="9" fill="#726c6c"/>
<rect x="831" y="296" width="1" height="8" fill="#736b6b"/>
<rect x="831" y="304" width="1" height="9" fill="#796868"/>
<rect x="831" y="330" width="1" height="9" fill="#766a6a"/>
<rect x="831" y="365" width="1" height="8" fill="#7a6868"/>
<rect x="831" y="399" width="1" height="9" fill="#7e6666"/>
<rect x="831" y="529" width="1" height="8" fill="#7d6767"/>
<rect x="1031" y="61" width="1" height="762" fill="#6e6e6e"/>
<rect x="1031" y="88" width="1" height="9" fill="#8d5f5f"/>
<rect x="1031" y="149" width="1" height="8" fill="#806565"/>
<rect x="1031" y="270" width="1" height="8" fill="#826464"/>
<rect x="1031" y="278" width="1" height="9" fill="#726c6c"/>
<rect x="1031" y="287" width="1" height="9" fill="#726c6c"/>
<rect x="1031" y="296" width="1" height="8" fill="#736b6b"/>
<rect x="1031" y="304" width="1" height="9" fill="#796868"/>
<rect x="1031" y="330" width="1" height="9" fill="#766a6a"/>
<rect x="1031" y="365" width="1" height="8" fill="#7a6868"/>
<rect x="1031" y="399" width="1" height="9" fill="#7e6666"/>
<rect x="1031" y="529" width="1" height="8" fill="#7c6767"/>
<g class="lb" shape-rendering="auto">
<text x="31" y="87.00">/System/tsd</text>
<text x="31" y="112.90">/Table/4</text>
<text x="31" y="138.80">/Table/7</text>
<text x="31" y="164.70">/Table/12</text>
<text x="31" y="190.60">/Table/15</text>
<text x="31" y="216.50">/Table/18</text>
<text x="31" y="242.40">/Table/21</text>
<text x="31" y="268.30">/Table/24</text>
<text x="31" y="294.20">/Table/27</text>
<text x="31" y="320.10">/NamespaceTable/30</text>
<text x="31" y="346.00">/Table/33</text>
<text x="31" y="371.90">/Table/36</text>
<text x="31" y="397.80">/Table/39</text>
<text x="31" y="423.70">/Table/42</text>
<text x="31" y="449.60">/Table/45</text>
<text x="31" y="475.50">/Table/48</text>
<text x="31" y="501.40">/Table/52</text>
<text x="31" y="527.30">/Table/55</text>
<text x="31" y="553.20">/Table/106</text>
<text x="31" y="579.10">/Table/106/1/"los angeles"/"\x99\x99\x99\x99\x99\x99H\x00\x80\x00\x00\x00\x00\x00\x00\x1e"</text>
<text x="31" y="605.00">/Table/106/1/"san francisco"/"\x80\x00\x00\x00\x00\x00@\x00\x80\x00\x00\x00\x00\x00\x00\x19"</text>
<text x="31" y="630.90">/Table/107</text>
<text x="31" y="656.80">/Table/107/1/"new york"/"\x11\x11\x11\x11\x11\x11A\x00\x80\x00\x00\x00\x00\x00\x00\x01"</text>
<text x="31" y="682.70">/Table/107/1/"seattle"/"UUUUUUD\x00\x80\x00\x00\x00\x00\x00\x00\x05"</text>
<text x="31" y="708.60">/Table/108</text>
<text x="31" y="734.50">/Table/108/1/"los angeles"/"\xa8\xf5\u008f\\(H\x00\x80\x00\x00\x00\x00\x00\x01J"</text>
<text x="31" y="760.40">/Table/108/1/"san francisco"/"\x8c\xcc\xcc\xcc\xcc\xcc@\x00\x80\x00\x00\x00\x00\x00\x01\x13"</text>
<text x="31" y="786.30">/Table/109</text>
<text x="31" y="812.20">/Table/111/1</text>
<text x="31" y="836">19:45:00.000Z</text>
<text x="31" y="851">2023-03-16</text>
<text x="231" y="836">19:50:00.000Z</text>
<text x="231" y="851">2023-03-16</text>
<text x="431" y="836">19:55:00.000Z</text>
<text x="431" y="851">2023-03-16</text>
<text x="631" y="836">20:10:00.000Z</text>
<text x="631" y="851">2023-03-16</text>
<text x="831" y="836">20:15:00.000Z</text>
<text x="831" y="851">2023-03-16</text>
<text x="1031" y="836">20:20:00.000Z</text>
<text x="1031" y="851">2023-03-16</text>
</g>
</svg>
<div class="abs tip">
<p style="top:3.6px"><span style="letter-spacing:0.043px">start key: </span><span style="letter-spacing:0.407px">/Table/106</span></p>
<p style="top:37.6px"><span style="letter-spacing:-0.286px">end key: </span><span style="letter-spacing:0.657px">/Table/106/1/</span><span style="letter-spacing:0.250px">"amsterdam"/"</span><span style="letter-spacing:0.511px">\xb333333</span><span style="letter-spacing:-0.188px;font-size:12px">@</span><span style="letter-spacing:0.714px">\x00\x80\x00\x00\x00\x00\x00\x00</span><span style="letter-spacing:0.105px">#"</span></p>
<p style="top:71.6px"><span style="letter-spacing:-0.020px">requests: </span><span style="letter-spacing:0.237px">28</span></p>
<p style="top:105.6px"><span style="letter-spacing:0.128px">time: </span><span style="letter-spacing:-0.197px">Thu, </span><span style="letter-spacing:-0.202px">16 </span><span style="letter-spacing:0.278px">Mar </span><span style="letter-spacing:0.454px">2023 </span><span style="letter-spacing:0.011px">19:55:00 </span><span style="letter-spacing:0.432px">GMT</span></p>
</div>
<svg class="abs cb" viewBox="0 0 13 13"><rect x="0" y="0" width="13" height="13" rx="2.2" fill="#1a73e8"/><path d="M2.8 6.8 L5.3 9.3 L10.2 3.6" fill="none" stroke="#fff" stroke-width="1.9"/></svg>
<label class="abs cbl"><span style="letter-spacing:-0.086px">Show span boundaries</span></label>
</body>
</html>
